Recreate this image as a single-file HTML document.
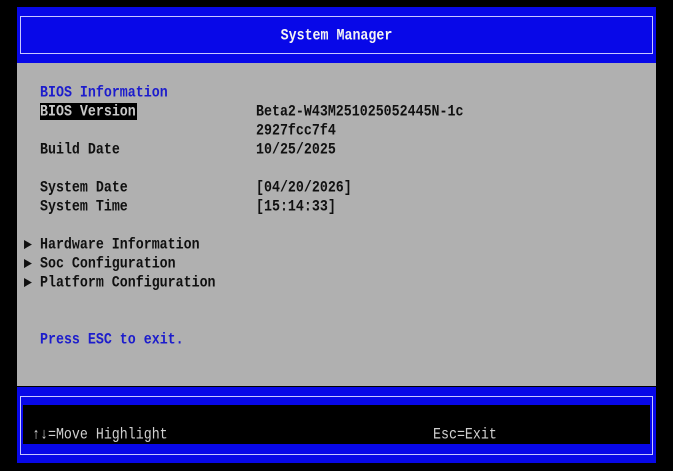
<!DOCTYPE html>
<html><head><style>
*{margin:0;padding:0}
body{width:673px;height:471px;background:#000;position:relative;overflow:hidden;font-family:"Liberation Mono",monospace;font-size:13.3px;font-weight:bold}
.a{position:absolute}
.t{position:absolute;line-height:19px;height:19px;white-space:pre;color:#101010;transform:scaleY(1.15);transform-origin:left center}
.b{color:#1c1ccc}
</style></head><body>
<div class="a" style="left:17px;top:7px;width:639px;height:56px;background:#0808e8"></div>
<div class="a" style="left:20px;top:16px;width:631px;height:36px;border:1px solid #c8c8ff"></div>
<div class="t" style="left:0;width:673px;top:26px;text-align:center;color:#f4f4f4;transform-origin:center">System Manager</div>
<div class="a" style="left:17px;top:63px;width:639px;height:323px;background:#b0b0b0"></div>
<div class="t b" style="left:40px;top:83px">BIOS Information</div>
<div class="a" style="left:40px;top:103px;width:97px;height:17px;background:#000"></div>
<div class="t" style="left:40px;top:102px;color:#c8c8c8">BIOS Version</div>
<div class="t" style="left:256px;top:102px">Beta2-W43M251025052445N-1c</div>
<div class="t" style="left:256px;top:121px">2927fcc7f4</div>
<div class="t" style="left:40px;top:140px">Build Date</div>
<div class="t" style="left:256px;top:140px">10/25/2025</div>
<div class="t" style="left:40px;top:178px">System Date</div>
<div class="t" style="left:256px;top:178px">[04/20/2026]</div>
<div class="t" style="left:40px;top:197px">System Time</div>
<div class="t" style="left:256px;top:197px">[15:14:33]</div>
<div class="t" style="left:24px;top:235px">&#9654; Hardware Information</div>
<div class="t" style="left:24px;top:254px">&#9654; Soc Configuration</div>
<div class="t" style="left:24px;top:273px">&#9654; Platform Configuration</div>
<div class="t b" style="left:40px;top:330px">Press ESC to exit.</div>
<div class="a" style="left:17px;top:387px;width:639px;height:76px;background:#0808e8"></div>
<div class="a" style="left:20px;top:396px;width:631px;height:57px;border:1px solid #c8c8ff"></div>
<div class="a" style="left:23px;top:405px;width:627px;height:39px;background:#000"></div>
<div class="t" style="left:32px;top:425px;color:#d0d0d0;font-weight:normal">&#8593;&#8595;=Move Highlight</div>
<div class="t" style="left:433px;top:425px;color:#d0d0d0;font-weight:normal">Esc=Exit</div>
</body></html>
